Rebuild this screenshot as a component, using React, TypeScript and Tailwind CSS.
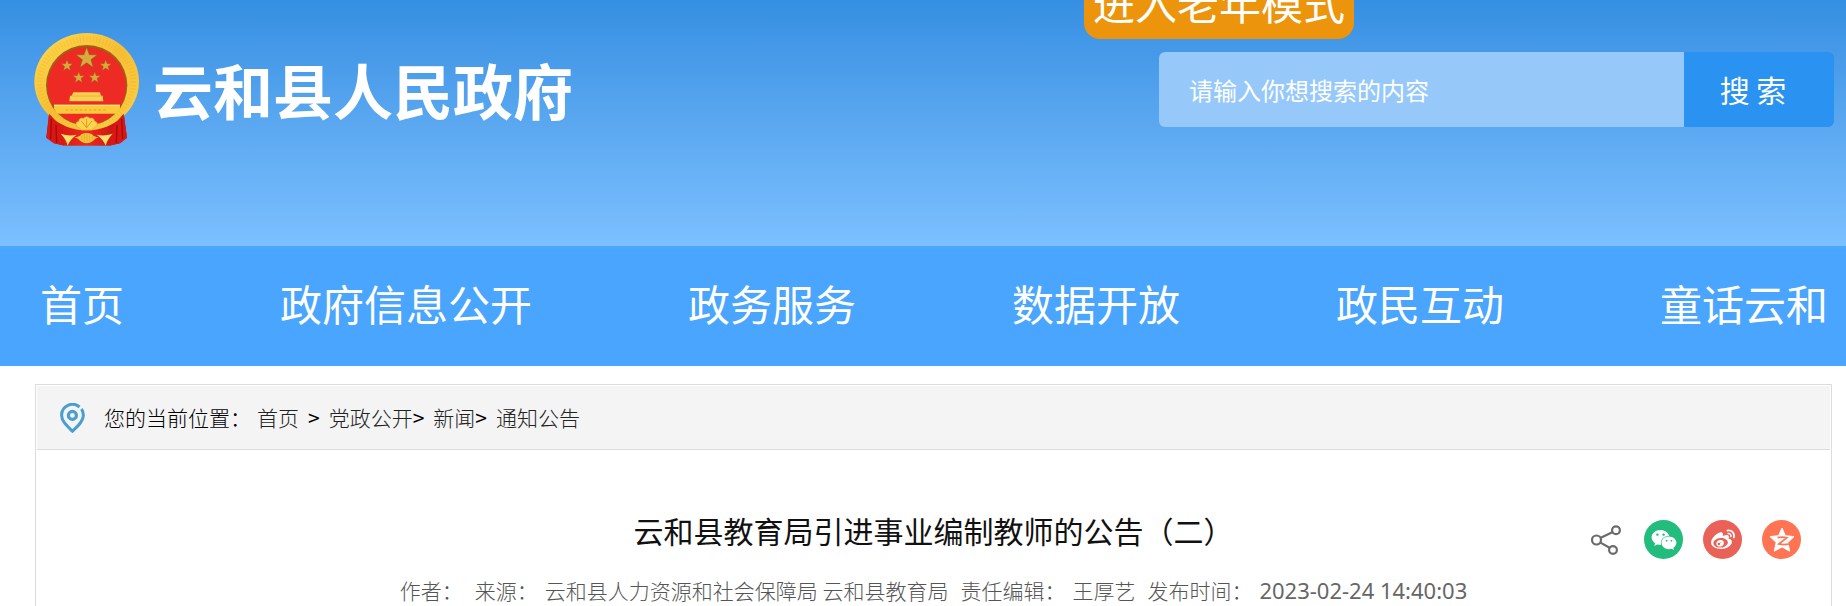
import { useState } from 'react';
import { FaWeibo, FaWeixin } from 'react-icons/fa';

const NAV_ITEMS = ['首页', '政府信息公开', '政务服务', '数据开放', '政民互动', '童话云和'];

const SMALL_STARS = [
  [99, 98],
  [215, 98],
  [134, 134],
  [182, 134],
];

const STAR = 'M0-10 2.4-3.2 9.5-3.1 3.8 1.2 5.9 8.1 0 4-5.9 8.1-3.8 1.2-9.5-3.1-2.4-3.2Z';

function Emblem() {
  return (
    <svg viewBox="0 0 315 339" className="h-[113px] w-[105px] shrink-0" aria-hidden="true">
      <defs>
        <linearGradient id="gold" x1="0" y1="0" x2="1" y2="1">
          <stop offset="0" stopColor="#ffd84c" />
          <stop offset="0.5" stopColor="#f6bf35" />
          <stop offset="1" stopColor="#fbd045" />
        </linearGradient>
        <linearGradient id="cloth" x1="0" y1="0" x2="1" y2="0">
          <stop offset="0" stopColor="#c90f10" />
          <stop offset="0.5" stopColor="#ef2a20" />
          <stop offset="1" stopColor="#b80d0f" />
        </linearGradient>
      </defs>
      {/* ribbon behind the wreath */}
      <path d="M45 240 37 314 60 331 94 338 225 338 258 331 279 314 269 240Z" fill="url(#cloth)" />
      <ellipse cx="158" cy="146" rx="157" ry="146" fill="url(#gold)" />
      <ellipse
        cx="158" cy="146" rx="140" ry="128" fill="none"
        stroke="#e9a727" strokeWidth="18" strokeDasharray="3 7" opacity="0.3"
      />
      <ellipse cx="158" cy="157" rx="122" ry="121" fill="#9b6415" />
      <ellipse cx="158" cy="159" rx="118" ry="117" fill="#ed2a24" />
      <g fill="#d9aa3c" stroke="#8d5b16" strokeWidth="0.5">
        <path d={STAR} transform="translate(158 76) scale(3.4)" />
        {SMALL_STARS.map(([x, y]) => (
          <path key={`${x}-${y}`} d={STAR} transform={`translate(${x} ${y}) scale(1.8)`} />
        ))}
      </g>
      {/* gate tower */}
      <path d="M118 178h80l3 10h5l2 17H106l2-17h5Z" fill="#fbcf52" />
      <path d="M112 189h92" stroke="#e2a035" strokeWidth="2" />
      <path d="M60 215h198v12l-10 15H70l-10-15Z" fill="#fbc93c" />
      <path d="M60 217h198" stroke="#ffe27a" strokeWidth="4" />
      <path d="M95 231h126" stroke="#e9b02f" strokeWidth="4" strokeDasharray="8 6" />
      {/* drapes */}
      <path d="M46 242 37 314 60 331 91 338 84 306 78 278Z" fill="#d91714" />
      <path d="M269 242 279 314 258 331 225 338 232 306 237 278Z" fill="#d91714" />
      <path d="m52 258-2 60M66 276l2 54M263 258l3 60M249 276l-2 54" stroke="#a30b0d" strokeWidth="4" />
      {/* knot and tassels */}
      <path d="M126 278Q124 266 134 265 137 252 148 256 158 246 168 256 179 252 182 265 192 266 190 278L172 291H144Z" fill="#fcd44e" stroke="#e3a42a" strokeWidth="2" />
      <path d="m158 284-16-20M158 284v-26M158 284l16-20" stroke="#dc9b27" strokeWidth="3" />
      <path d="M80 302q26 9 48 3-20 14-27 33-4-18-21-36M236 302q-26 9-48 3 20 14 27 33 4-18 21-36" fill="#ffe16a" />
      <path d="M122 313q15-1 20-9 16-8 32 0 5 8 20 9-12 4-17 11-19 14-38 0-5-7-17-11Z" fill="#f8c53a" />
      <path d="M143 309v13M151 304v23M159 303v24M167 304v22M175 309v13" stroke="#dda12b" strokeWidth="2" />
    </svg>
  );
}

function PinIcon() {
  return (
    <svg viewBox="0 0 25 30" className="h-[30px] w-[25px] shrink-0" fill="none" stroke="#4a9fcf" aria-hidden="true">
      <path d="M19.5 4A10.8 10.8 0 0 0 1.6 12.2C1.6 18 6.5 22.5 12.4 28.2 18.3 22.5 23.4 18 23.4 12.2 23.4 9.8 22.8 7.8 21.4 6" strokeWidth="3" />
      <circle cx="12.4" cy="12.4" r="4" strokeWidth="3.2" />
    </svg>
  );
}

function ShareIcon() {
  return (
    <svg viewBox="0 0 30 30" className="size-[30px]" fill="none" stroke="#6b6b6b" strokeWidth="2.2">
      <circle cx="5.5" cy="15" r="4.5" />
      <circle cx="25" cy="5.2" r="3.9" />
      <circle cx="22" cy="25" r="3.9" />
      <path d="m9.8 12.8 11.5-5.6M9.4 17.6l9.2 5.2" />
    </svg>
  );
}

function QzoneIcon() {
  return (
    <svg viewBox="0 0 26 26" className="size-[26px]">
      <path d="m13 1 3.4 7.7 8.6.9-6.2 5.8 1.9 8.8L13 19.9l-7.7 4.3 1.9-8.8L1 9.6l8.6-.9Z" fill="#fff" strokeLinejoin="round" stroke="#fff" />
      <path d="M8.5 10.6q5-1 9.4.1L9.8 17q4 .9 10 .2" fill="none" stroke="#ff7452" strokeWidth="1.7" />
    </svg>
  );
}

export default function App() {
  const [keyword, setKeyword] = useState('');

  return (
    <div className="bg-white font-['Noto_Sans_CJK_SC',sans-serif]">
      <header className="relative flex h-[246px] items-start justify-between overflow-hidden bg-linear-to-b from-[#358fe2] to-[#7cc0ff] pr-3 pl-[34px]">
        <a href="#" className="mt-[33px] flex items-start gap-[14px]">
          <Emblem />
          <h1 className="mt-5 text-[60px] leading-[72px] font-bold text-white">云和县人民政府</h1>
        </a>
        <form className="mt-[52px] flex h-[75px] w-[675px]" onSubmit={(e) => e.preventDefault()}>
          <input
            type="text"
            aria-label="请输入你想搜索的内容"
            placeholder="请输入你想搜索的内容"
            value={keyword}
            onChange={(e) => setKeyword(e.target.value)}
            className="min-w-0 flex-1 rounded-l-md bg-[#96c9f9] px-[30px] text-2xl text-white outline-none placeholder:text-white"
          />
          <button type="submit" className="w-[150px] rounded-r-md bg-[#2a92f0] pr-3 text-[30px] text-white">
            搜 索
          </button>
        </form>
        <button
          type="button"
          className="absolute -top-9 right-[492px] h-[75px] w-[270px] rounded-2xl bg-[#ec950c] text-[42px] leading-none text-white"
        >
          进入老年模式
        </button>
      </header>

      <nav className="flex h-[120px] items-center justify-between bg-[#49a5fd] pr-[18px] pb-2 pl-10 text-[42px] text-white">
        {NAV_ITEMS.map((item) => (
          <a key={item} href="#" className="whitespace-nowrap">
            {item}
          </a>
        ))}
      </nav>

      <main className="mt-[18px] mr-[14px] ml-[35px] border border-b-0 border-[#dcdcdc] p-px">
        <div className="flex h-16 items-center border-b border-[#dcdcdc] bg-[#f4f4f4] pl-[23px] text-[21px] font-light text-black">
          <PinIcon />
          <span className="ml-[19px]">您的当前位置：</span>
          <div className="ml-1.5 flex items-baseline gap-[9px] text-[#222]">
            <a href="#">首页</a>
            <span className="font-normal text-black">&gt;</span>
            <span><a href="#">党政公开</a><span className="font-normal text-black">&gt;</span></span>
            <span><a href="#">新闻</a><span className="font-normal text-black">&gt;</span></span>
            <a href="#">通知公告</a>
          </div>
        </div>

        <div className="grid grid-cols-[1fr_auto_1fr] items-start pt-[58px]">
          <h2 className="col-start-2 text-[30px] leading-[44px] text-[#111]">云和县教育局引进事业编制教师的公告（二）</h2>
          <div className="mt-3 mr-[29px] flex items-center justify-end gap-5">
            <button type="button" aria-label="分享" className="mr-[3px]">
              <ShareIcon />
            </button>
            <a href="#" aria-label="微信" className="flex size-[39px] items-center justify-center rounded-full bg-[#22bc7d]">
              <FaWeixin className="size-[26px] text-white" />
            </a>
            <a href="#" aria-label="微博" className="flex size-[39px] items-center justify-center rounded-full bg-[#e96157]">
              <FaWeibo className="size-6 text-white" />
            </a>
            <a href="#" aria-label="QQ空间" className="flex size-[39px] items-center justify-center rounded-full bg-[#ff7452]">
              <QzoneIcon />
            </a>
          </div>
        </div>

        <div className="mt-[15px] flex h-8 items-center justify-center gap-3 text-[21px] leading-8 font-light whitespace-nowrap text-[#555]">
          <span>作者：</span>
          <span className="flex gap-[7px]">
            <span>来源：</span>
            <span>云和县人力资源和社会保障局 云和县教育局</span>
          </span>
          <span className="flex gap-[7px]">
            <span>责任编辑：</span>
            <span>王厚艺</span>
          </span>
          <span className="flex gap-[7px]">
            <span>发布时间：</span>
            <time className="font-['Noto_Sans'] text-[22px] font-normal text-[#666]">2023-02-24 14:40:03</time>
          </span>
        </div>
      </main>
    </div>
  );
}
